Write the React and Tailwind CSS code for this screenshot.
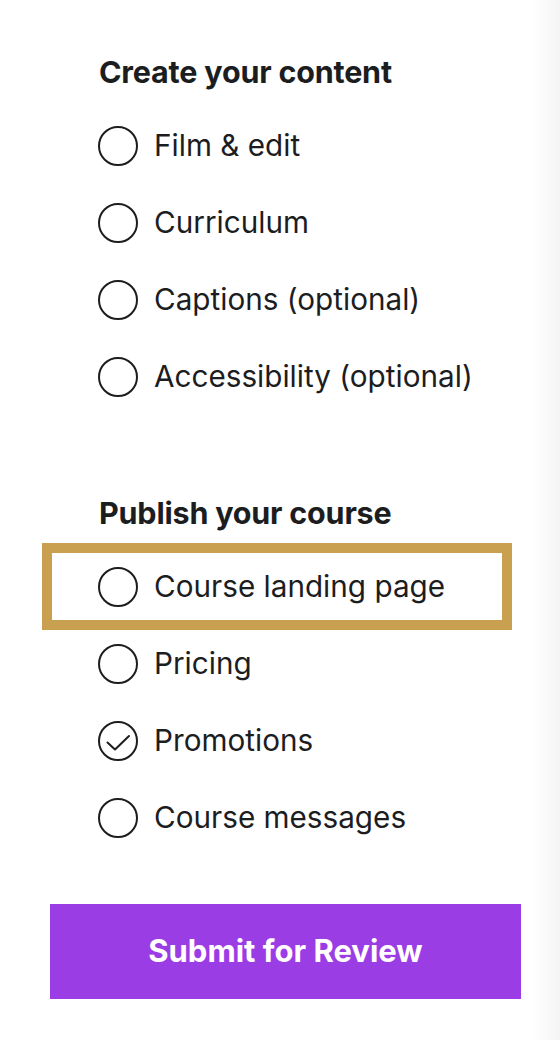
const sections = [
  {
    title: 'Create your content',
    items: [
      { label: 'Film & edit' },
      { label: 'Curriculum' },
      { label: 'Captions (optional)' },
      { label: 'Accessibility (optional)' },
    ],
  },
  {
    title: 'Publish your course',
    items: [
      { label: 'Course landing page', highlight: true },
      { label: 'Pricing' },
      { label: 'Promotions', done: true },
      { label: 'Course messages' },
    ],
  },
];

function Circle({ done }) {
  return (
    <svg width="40" height="40" viewBox="0 0 40 40" className="shrink-0">
      <circle cx="20" cy="20" r="19" fill="none" stroke="#1c1d1f" strokeWidth="2" />
      {done && (
        <path
          d="M9.5 21.5 L17 28.5 L31 15"
          fill="none"
          stroke="#1c1d1f"
          strokeWidth="2"
          strokeLinecap="round"
          strokeLinejoin="round"
        />
      )}
    </svg>
  );
}

export default function App() {
  return (
    <div
      className="w-[560px] h-[1040px] bg-[linear-gradient(to_right,#ffffff_0%,#ffffff_95%,#f4f4f4_100%)] text-[#1c1d1f]"
      style={{ fontFamily: 'Inter, "Liberation Sans", sans-serif' }}
    >
      <div className="pt-[52px] pl-[47px]">
        {sections.map((section, i) => (
          <div key={section.title} className={i > 0 ? 'mt-[78px]' : ''}>
            <h2 className="h-[40px] flex items-center pl-[52px] text-[30.5px] font-bold tracking-[-0.2px]">
              {section.title}
            </h2>
            <ul className="mt-[15px]">
              {section.items.map((item) => (
                <li
                  key={item.label}
                  className={
                    'w-[460px] h-[77px] flex items-center gap-[16px] pl-[51px] ' +
                    (item.highlight
                      ? 'outline-solid outline-[10px] outline-offset-[-5px] outline-[#c8a04f]'
                      : '')
                  }
                >
                  <Circle done={item.done} />
                  <span className="text-[29.7px] leading-none">{item.label}</span>
                </li>
              ))}
            </ul>
          </div>
        ))}
      </div>
      <div className="pl-[50px] mt-[48px]">
        <button className="w-[471px] h-[95px] bg-[#9b3de5] text-white text-[31px] font-bold flex items-center justify-center">
          Submit for Review
        </button>
      </div>
    </div>
  );
}
